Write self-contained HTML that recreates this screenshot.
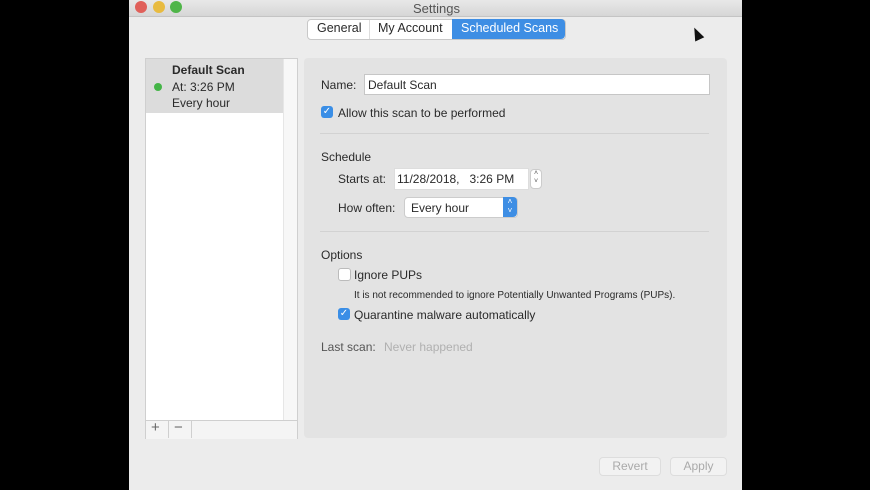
<!DOCTYPE html>
<html><head><style>
body{margin:0;width:870px;height:490px;background:#000;position:relative;overflow:hidden;font-family:"Liberation Sans",sans-serif;font-size:12px;color:#2a2a2a}
.a{position:absolute}
.win{left:129px;top:0;width:613px;height:490px;background:#ececec}
.title{left:129px;top:0;width:613px;height:16px;background:linear-gradient(#e8e8e8,#d6d6d6);border-bottom:1px solid #c4c4c4}
.dot{width:12px;height:12px;border-radius:50%;top:1px}
.cb{width:12px;height:12px;border-radius:3px}
.on{background:#3a8ee6;color:#fff;font-size:10px;line-height:12px;text-align:center}
.off{background:#fff;border:1px solid #bbb;width:11px;height:11px}
.hr{height:1px;background:#d2d2d2;left:320px;width:389px}
</style></head><body>
<div class="a win"></div>
<div class="a title"></div>
<div class="a dot" style="left:135px;background:#e0605a"></div>
<div class="a dot" style="left:153px;background:#e8bb40"></div>
<div class="a dot" style="left:170px;background:#4fb548"></div>
<div class="a" style="left:413px;top:1px;font-size:13px;color:#555">Settings</div>
<div class="a" style="left:307px;top:19px;width:257px;height:19px;background:#fff;border:1px solid #c8c8c8;border-radius:4px"></div>
<div class="a" style="left:317px;top:21px;font-size:12.5px">General</div>
<div class="a" style="left:369px;top:20px;width:1px;height:19px;background:#ddd"></div>
<div class="a" style="left:378px;top:21px;font-size:12.5px">My Account</div>
<div class="a" style="left:452px;top:19px;width:113px;height:20px;background:#3e8ee4;border-radius:0 4px 4px 0"></div>
<div class="a" style="left:461px;top:21px;font-size:12.5px;color:#fff">Scheduled Scans</div>
<!-- left list -->
<div class="a" style="left:145px;top:58px;width:151px;height:379px;background:#fff;border:1px solid #cfcfcf"></div>
<div class="a" style="left:146px;top:59px;width:137px;height:54px;background:#dcdcdc"></div>
<div class="a" style="left:283px;top:59px;width:13px;height:361px;background:#f7f7f7;border-left:1px solid #e6e6e6"></div>
<div class="a" style="left:172px;top:63px;font-weight:bold">Default Scan</div>
<div class="a" style="left:172px;top:80px">At: 3:26 PM</div>
<div class="a" style="left:172px;top:96px">Every hour</div>
<div class="a" style="left:154px;top:83px;width:8px;height:8px;border-radius:50%;background:#44b547"></div>
<div class="a" style="left:146px;top:420px;width:151px;height:18px;background:#f4f4f4;border-top:1px solid #cfcfcf"></div>
<div class="a" style="left:168px;top:420px;width:1px;height:18px;background:#cfcfcf"></div>
<div class="a" style="left:191px;top:420px;width:1px;height:18px;background:#cfcfcf"></div>
<div class="a" style="left:151px;top:419px;font-size:15px;color:#666">+</div>
<div class="a" style="left:174px;top:419px;font-size:15px;color:#666">−</div>
<!-- right panel -->
<div class="a" style="left:304px;top:58px;width:423px;height:380px;background:#e3e3e3;border-radius:4px"></div>
<div class="a" style="left:321px;top:78px">Name:</div>
<div class="a" style="left:364px;top:74px;width:344px;height:19px;background:#fff;border:1px solid #c6c6c6"></div>
<div class="a" style="left:368px;top:78px">Default Scan</div>
<div class="a cb on" style="left:321px;top:106px">✓</div>
<div class="a" style="left:338px;top:106px">Allow this scan to be performed</div>
<div class="a hr" style="top:133px"></div>
<div class="a" style="left:321px;top:150px">Schedule</div>
<div class="a" style="left:338px;top:172px">Starts at:</div>
<div class="a" style="left:394px;top:168px;width:133px;height:20px;background:#fff;border:1px solid #ddd"></div>
<div class="a" style="left:397px;top:172px">11/28/2018, &nbsp; 3:26 PM</div>
<div class="a" style="left:530px;top:169px;width:10px;height:18px;background:#fff;border:1px solid #ccc;border-radius:4px;font-size:7px;line-height:8px;text-align:center;color:#555">˄<br>˅</div>
<div class="a" style="left:338px;top:201px">How often:</div>
<div class="a" style="left:404px;top:197px;width:112px;height:19px;background:#fff;border:1px solid #ccc;border-radius:4px"></div>
<div class="a" style="left:503px;top:197px;width:14px;height:20px;background:#3e8ee4;border-radius:0 4px 4px 0;color:#fff;font-size:8px;text-align:center;line-height:9px">˄<br>˅</div>
<div class="a" style="left:411px;top:201px">Every hour</div>
<div class="a hr" style="top:231px"></div>
<div class="a" style="left:321px;top:248px">Options</div>
<div class="a cb off" style="left:338px;top:268px"></div>
<div class="a" style="left:354px;top:268px">Ignore PUPs</div>
<div class="a" style="left:354px;top:290px;font-size:10px">It is not recommended to ignore Potentially Unwanted Programs (PUPs).</div>
<div class="a cb on" style="left:338px;top:308px">✓</div>
<div class="a" style="left:354px;top:308px">Quarantine malware automatically</div>
<div class="a" style="left:321px;top:340px;color:#555">Last scan:</div>
<div class="a" style="left:384px;top:340px;color:#b0b0b0">Never happened</div>
<div class="a" style="left:599px;top:457px;width:60px;height:17px;border:1px solid #ddd;border-radius:4px;background:#f2f2f2;color:#aaa;text-align:center;line-height:17px">Revert</div>
<div class="a" style="left:670px;top:457px;width:55px;height:17px;border:1px solid #ddd;border-radius:4px;background:#f2f2f2;color:#aaa;text-align:center;line-height:17px">Apply</div>
<div class="a" style="left:692px;top:27px;width:0;height:0;border-left:5px solid transparent;border-right:5px solid transparent;border-bottom:13px solid #111;transform:rotate(-25deg)"></div>
</body></html>
